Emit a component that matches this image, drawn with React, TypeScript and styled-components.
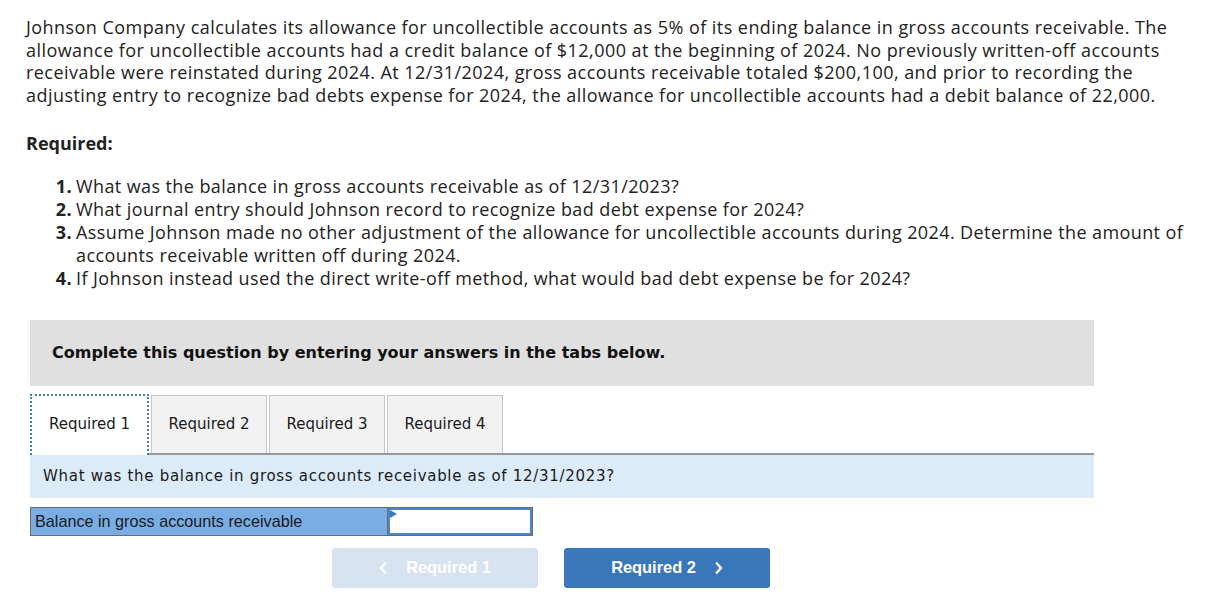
import React from 'react';
import styled, { createGlobalStyle } from 'styled-components';

const GlobalStyle = createGlobalStyle`
  body {
    margin: 0;
    background: #ffffff;
    color: #1a1a1a;
    font-family: 'Open Sans', 'Lato', sans-serif;
  }
`;

const Page = styled.div`
  padding: 16px 20px 0 26px;
  width: 1209px;
  box-sizing: border-box;
`;

const Intro = styled.p`
  margin: 0;
  font-size: 18px;
  line-height: 22.7px;
  letter-spacing: 0.45px;
  white-space: nowrap;
  color: #222;
`;

const RequiredTitle = styled.div`
  margin-top: 24px;
  font-size: 18px;
  font-weight: 700;
  color: #222;
`;

const List = styled.div`
  margin-top: 20px;
  display: flex;
  flex-direction: column;
`;

const Item = styled.div`
  display: flex;
  font-size: 18px;
  line-height: 23px;
  letter-spacing: 0.4px;
  color: #222;
`;

const Num = styled.span`
  flex: 0 0 50px;
  text-align: right;
  padding-right: 4px;
  box-sizing: border-box;
  font-weight: 700;
`;

const ItemText = styled.span`
  flex: 1;
  white-space: nowrap;
`;

const Panel = styled.div`
  margin-top: 30px;
  margin-left: 4px;
  width: 1064px;
`;

const Banner = styled.div`
  background: #e0e0e0;
  height: 66px;
  display: flex;
  align-items: center;
  padding-left: 22px;
  font-family: 'DejaVu Sans', Verdana, sans-serif;
  font-weight: 700;
  font-size: 16px;
  color: #111;
`;

const Tabs = styled.div`
  margin-top: 8px;
  display: flex;
  align-items: flex-end;
  gap: 2px;
  position: relative;
  z-index: 1;
`;

const Tab = styled.div<{ $active?: boolean; $w: number }>`
  width: ${(p) => p.$w}px;
  height: ${(p) => (p.$active ? 61 : 58)}px;
  box-sizing: border-box;
  display: flex;
  align-items: center;
  justify-content: center;
  padding-bottom: ${(p) => (p.$active ? 2 : 0)}px;
  font-family: 'DejaVu Sans', Verdana, sans-serif;
  font-size: 15px;
  color: #1a1a1a;
  background: ${(p) => (p.$active ? '#ffffff' : '#f2f2f2')};
  border: ${(p) => (p.$active ? '2px dotted #3f7cc0' : '1px solid #c8c8c8')};
  border-bottom: none;
  margin-bottom: ${(p) => (p.$active ? -2 : 0)}px;
`;

const QuestionBand = styled.div`
  border-top: 2px solid #999;
  background: #dbebf8;
  height: 43px;
  display: flex;
  align-items: center;
  padding-left: 13px;
  font-family: 'DejaVu Sans', Verdana, sans-serif;
  font-size: 15px;
  color: #1a1a1a;
  letter-spacing: 0.7px;
`;

const AnswerRow = styled.div`
  margin-top: 9px;
  display: flex;
  width: 503px;
  height: 29px;
  border: 1px solid #6b6b6b;
  box-sizing: border-box;
`;

const Label = styled.div`
  flex: 0 0 357px;
  box-sizing: border-box;
  background: #7aade4;
  border-right: 1px solid #6b6b6b;
  display: flex;
  align-items: center;
  padding-left: 4px;
  font-family: 'Liberation Sans', Arial, sans-serif;
  font-size: 16.2px;
  color: #1a1a1a;
`;

const InputCell = styled.div`
  flex: 1;
  position: relative;
  background: #fff;
  border: 2px solid #4a86c8;
`;

const Flag = styled.span`
  position: absolute;
  left: 0;
  top: 0;
  width: 0;
  height: 0;
  border-top: 4px solid transparent;
  border-bottom: 4px solid transparent;
  border-left: 7px solid #3a77bb;
`;

const Nav = styled.div`
  margin-top: 12px;
  display: flex;
  gap: 26px;
  padding-left: 302px;
`;

const NavButton = styled.div<{ $disabled?: boolean }>`
  width: 206px;
  height: 40px;
  border-radius: 3px;
  background: ${(p) => (p.$disabled ? '#d8e3f1' : '#3a76ba')};
  color: #ffffff;
  display: flex;
  align-items: center;
  justify-content: center;
  gap: 18px;
  font-family: 'Liberation Sans', Arial, sans-serif;
  font-weight: 700;
  font-size: 16.4px;
`;

const Chevron = ({ dir }: { dir: 'left' | 'right' }) => (
  <svg width="9" height="14" viewBox="0 0 9 14">
    <path
      d={dir === 'left' ? 'M7 1.5 L2 7 L7 12.5' : 'M2 1.5 L7 7 L2 12.5'}
      fill="none"
      stroke="#ffffff"
      strokeWidth="2.4"
    />
  </svg>
);

const tabs = [
  { label: 'Required 1', w: 119 },
  { label: 'Required 2', w: 116 },
  { label: 'Required 3', w: 116 },
  { label: 'Required 4', w: 116 },
];

export default function App() {
  return (
    <Page>
      <GlobalStyle />
      <Intro>
        Johnson Company calculates its allowance for uncollectible accounts as 5% of its ending balance in gross
        accounts receivable. The
        <br />
        allowance for uncollectible accounts had a credit balance of $12,000 at the beginning of 2024. No previously
        written-off accounts
        <br />
        receivable were reinstated during 2024. At 12/31/2024, gross accounts receivable totaled $200,100, and prior
        to recording the
        <br />
        adjusting entry to recognize bad debts expense for 2024, the allowance for uncollectible accounts had a debit
        balance of 22,000.
      </Intro>
      <RequiredTitle>Required:</RequiredTitle>
      <List>
        <Item>
          <Num>1.</Num>
          <ItemText>What was the balance in gross accounts receivable as of 12/31/2023?</ItemText>
        </Item>
        <Item>
          <Num>2.</Num>
          <ItemText>What journal entry should Johnson record to recognize bad debt expense for 2024?</ItemText>
        </Item>
        <Item>
          <Num>3.</Num>
          <ItemText>
            Assume Johnson made no other adjustment of the allowance for uncollectible accounts during 2024. Determine
            the amount of
            <br />
            accounts receivable written off during 2024.
          </ItemText>
        </Item>
        <Item>
          <Num>4.</Num>
          <ItemText>If Johnson instead used the direct write-off method, what would bad debt expense be for 2024?</ItemText>
        </Item>
      </List>
      <Panel>
        <Banner>Complete this question by entering your answers in the tabs below.</Banner>
        <Tabs>
          {tabs.map((t, i) => (
            <Tab key={t.label} $w={t.w} $active={i === 0}>
              {t.label}
            </Tab>
          ))}
        </Tabs>
        <QuestionBand>What was the balance in gross accounts receivable as of 12/31/2023?</QuestionBand>
        <AnswerRow>
          <Label>Balance in gross accounts receivable</Label>
          <InputCell>
            <Flag />
          </InputCell>
        </AnswerRow>
        <Nav>
          <NavButton $disabled>
            <Chevron dir="left" />
            Required 1
          </NavButton>
          <NavButton>
            Required 2
            <Chevron dir="right" />
          </NavButton>
        </Nav>
      </Panel>
    </Page>
  );
}
